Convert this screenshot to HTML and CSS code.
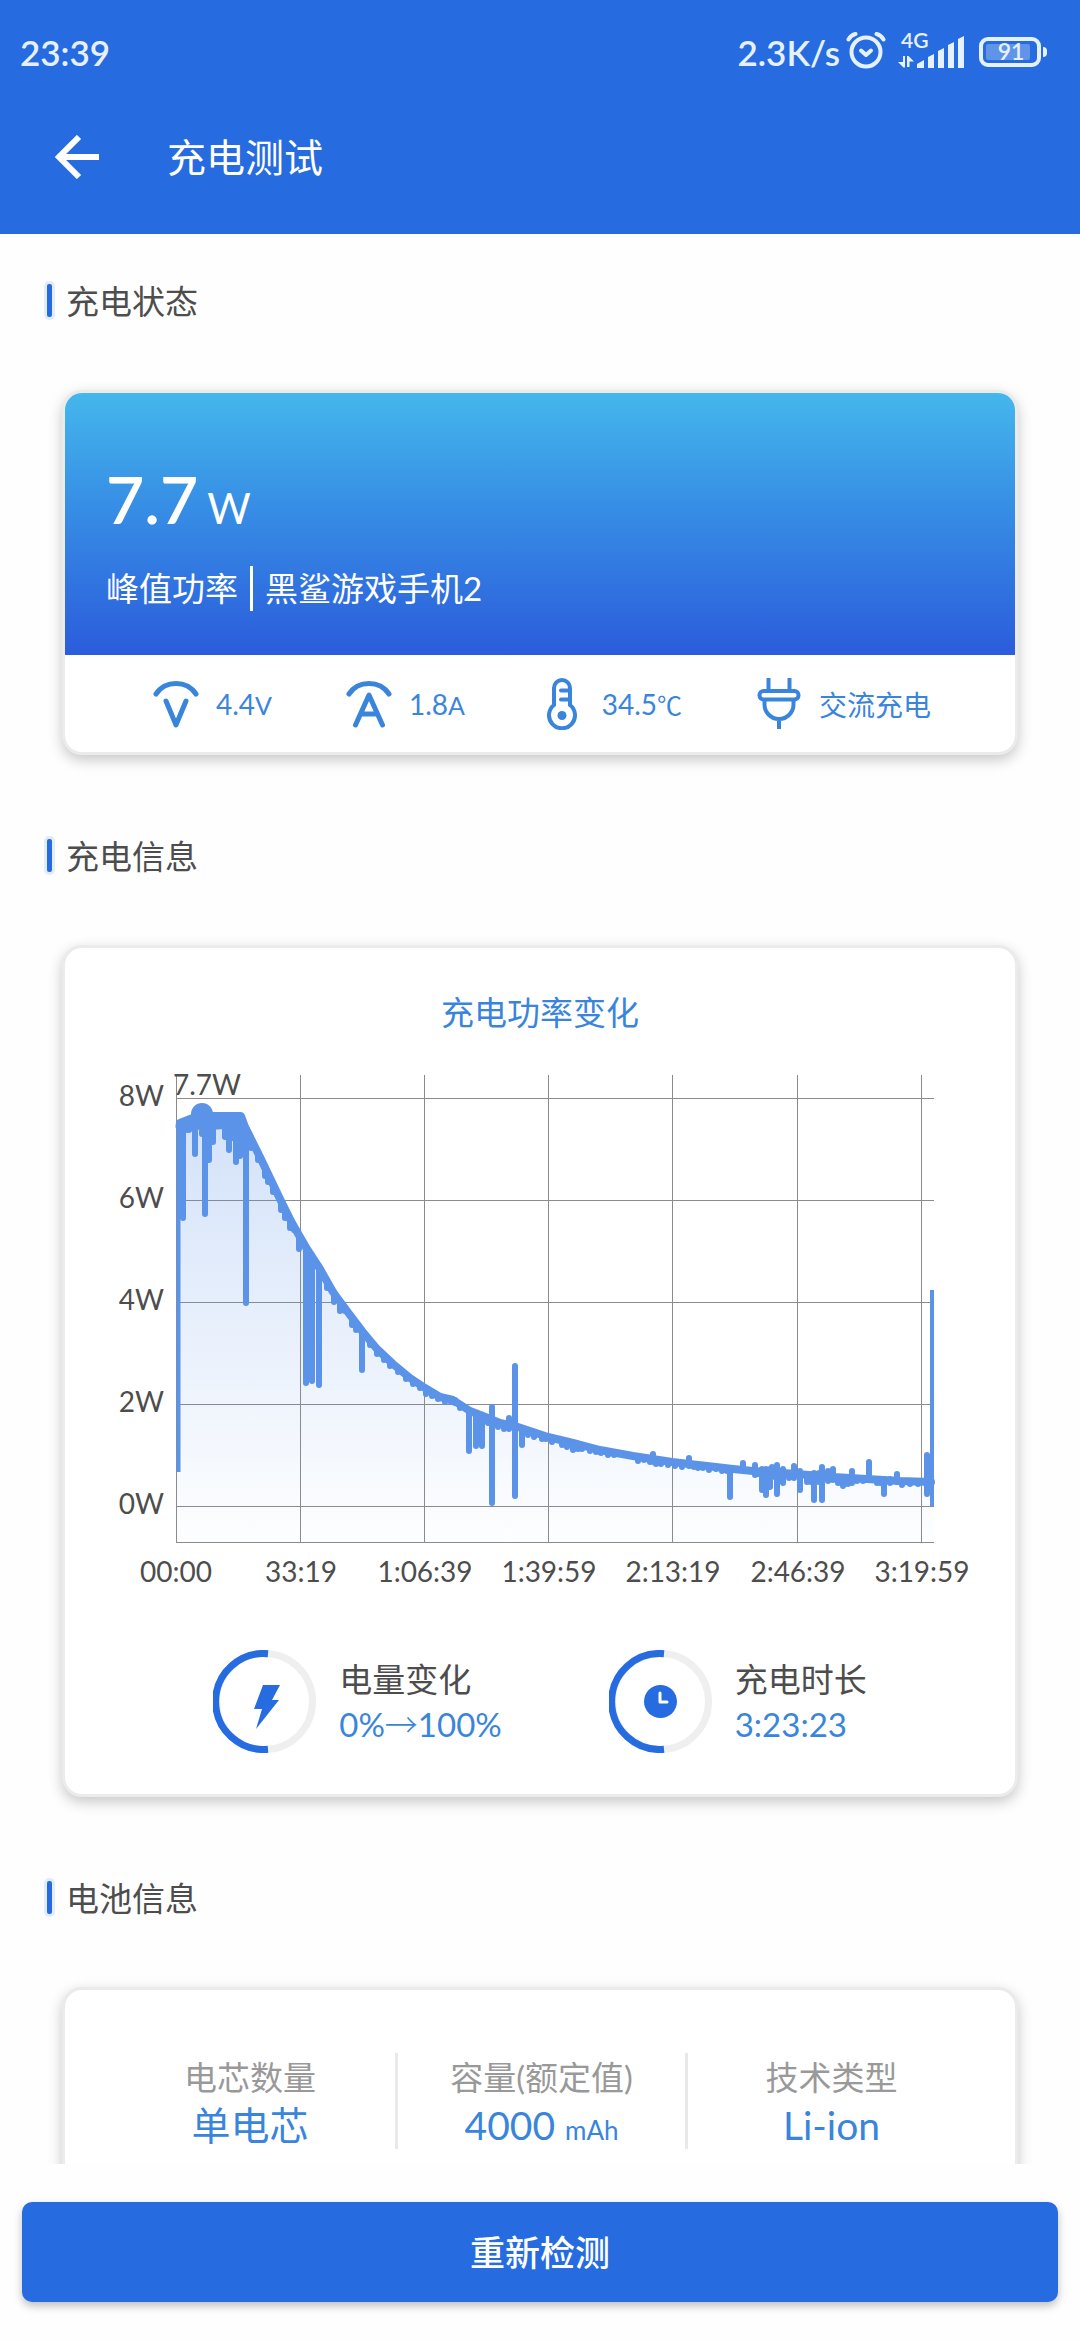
FILE: index.html
```html
<!DOCTYPE html>
<html lang="zh-CN">
<head>
<meta charset="utf-8">
<meta name="viewport" content="width=device-width, initial-scale=1">
<title>充电测试</title>
<link rel="stylesheet" href="styles.css">
</head>
<body>
<div class="app">
  <header class="header">
    <div class="status">
      <span class="status-time">23:39</span>
      <div class="status-right">
        <span>2.3K/s</span>
        <svg class="alarm" width="40" height="40" viewBox="0 0 40 40" fill="none" stroke="currentColor" stroke-width="4" stroke-linecap="round" stroke-linejoin="round">
          <circle cx="20" cy="20" r="14.500"/>
          <path d="M2.500 7.500Q5 3 9.500 2M37.500 7.500Q35 3 30.500 2"/>
          <path d="M15 18.500l5 4.500 5-4.500"/>
        </svg>
        <svg class="signal" width="68" height="56" viewBox="0 -8 68 56" fill="currentColor">
          <text class="signal-label" x="3" y="16">4G</text>
          <path d="M5 24v6H0l5.500 5.500H7V24zM9 35V24h1.500l5.500 5.500h-4.500V35z"/>
          <path d="M19 36v-4l7-4v8zM30 36V25l6-3v14zM40 36V19l6-3v20zM50 36V13l6-3v26zM60 36V7l6-3v32z"/>
        </svg>
        <svg class="battery" width="70" height="32" viewBox="0 0 70 32">
          <rect x="3" y="3" width="58" height="26" rx="7" fill="none" stroke="currentColor" stroke-width="4"/>
          <rect x="8" y="8" width="44" height="16" rx="2" fill="currentColor" opacity=".3"/>
          <path d="M65 11a4 4 0 0 1 4 4v2a4 4 0 0 1-4 4z" fill="currentColor"/>
          <text class="battery-label" x="33" y="24" text-anchor="middle">91</text>
        </svg>
      </div>
    </div>
    <div class="appbar">
      <button class="back" type="button" aria-label="返回">
        <svg width="44" height="44" viewBox="0 0 44 44" fill="none" stroke="currentColor" stroke-width="6">
          <path d="M44 22H4M24 2L4 22l20 20"/>
        </svg>
      </button>
      <h1 class="title">充电测试</h1>
    </div>
  </header>

  <main class="content">
    <h2 class="section">充电状态</h2>
    <section class="card">
      <div class="hero">
        <p class="power"><strong>7.7</strong><span class="power-unit">W</span></p>
        <p class="hero-line"><span>峰值功率</span><span class="device">黑鲨游戏手机2</span></p>
      </div>
      <ul class="metrics">
        <li class="metric">
          <svg width="46" height="52" viewBox="0 0 46 52" fill="none" stroke="currentColor" stroke-width="5" stroke-linecap="round" stroke-linejoin="round">
            <path d="M3 16Q10 5.500 23 5.500T43 16M13 23l10 24 10-24"/>
          </svg>
          <span>4.4<small>V</small></span>
        </li>
        <li class="metric">
          <svg width="46" height="52" viewBox="0 0 46 52" fill="none" stroke="currentColor" stroke-width="5" stroke-linecap="round" stroke-linejoin="round">
            <path d="M3 16Q10 5.500 23 5.500T43 16M9.500 47L23 17l13.500 30M15 36h16"/>
          </svg>
          <span>1.8<small>A</small></span>
        </li>
        <li class="metric">
          <svg width="46" height="52" viewBox="0 0 46 52" fill="none" stroke="currentColor" stroke-width="4" stroke-linecap="round">
            <path d="M15 27V10a8 8 0 0 1 16 0v17a13 13 0 1 1-16 0M22 12.500h8M22 21.500h8"/>
            <circle cx="23" cy="37.500" r="4.500" fill="currentColor" stroke="none"/>
          </svg>
          <span>34.5<small>℃</small></span>
        </li>
        <li class="metric">
          <svg width="46" height="52" viewBox="0 0 46 52" fill="none" stroke="currentColor" stroke-width="4">
            <rect x="3.500" y="13" width="39" height="8.500" rx="4"/>
            <path d="M12.500 0v12M33.500 0v12M8.500 22v4.500a14.500 14.500 0 0 0 29 0V22M23 41v10"/>
          </svg>
          <span>交流充电</span>
        </li>
      </ul>
    </section>

    <h2 class="section">充电信息</h2>
    <section class="card">
      <h3 class="chart-title">充电功率变化</h3>
      <svg class="chart" viewBox="0 0 950 546" role="img" aria-label="充电功率变化">
        <defs>
          <linearGradient id="area" gradientUnits="userSpaceOnUse" x1="0" y1="60" x2="0" y2="492">
            <stop offset="0" stop-color="#5b92e8" stop-opacity=".27"/>
            <stop offset="1" stop-color="#5b92e8" stop-opacity=".01"/>
          </linearGradient>
        </defs>
        <path class="grid" d="M111 48.500H869M111 150.500H869M111 252.500H869M111 354.500H869M111 456.500H869M111 492.500H869M111.500 25V493M235.500 25V493M359.500 25V493M483.500 25V493M607.500 25V493M732.500 25V493M856.500 25V493"/>
        <path fill="url(#area)" d="M112 70L177 71 185 88 195 107 205 128 215 149 227 173 235 187 242 199 255 218 268 242 282 261 297 281 312 299 328 314 345 328 360 338 375 347 388 350 405 361 418 366 435 373 450 376 468 382 483 387 508 393 535 400 568 406 607 412 642 416 668 419 688 421 732 424 768 427 802 429 835 431 869 432V492H112z"/>
        <g class="line">
          <path class="band" d="M115 73L125 69 137 66 176 66 180 77 185 87 195 107 205 128 215 149 227 173 235 187 242 199 255 219 268 242 282 261 297 281 312 299 328 314 345 328 360 338 375 347 388 350 405 361 418 366 435 373 450 376 468 382 483 387 508 393 535 400 568 406 607 412 642 416 668 419 688 421 732 424 768 427 802 429 835 431 866 432"/>
          <path class="plateau" d="M118 76L137 71 152 72 165 71 173 72 181 87"/>
          <path class="edge" d="M113.500 70V422M867 240V456"/>
          <path d="M116 76V156M118 76V168M124 74V80M130 70V104M137 70V84M140 70V164M144 70V110M148 70V92M155 70V74M160 68V87M164 68V100M168 68V88M171 68V112M175 70V106M181 80V253M186 90V98M193 102V110M200 118V126M203 124V132M208 134V142M216 150V160M220 160V168M225 170V178M229 176V180M234 186V199M241 198V333M247 206V331M254 216V335M262 232V238M269 242V252M275 252V261M280 258V261M287 268V275M291 274V280M297 281V320M305 292V295M312 300V304M319 306V310M325 312V316M333 318V322M341 326V329M348 331V334M355 336V338M361 339V344M367 342V346M373 346V349M380 348V352M386 350V352M390 350V353M395 354V358M404 361V401M411 363V396M417 366V396M423 368V373M427 357V453M433 373V377M439 374V379M444 368V379M450 316V446M457 378V395M463 381V385M469 383V387M477 386V389M481 387V389M487 388V392M497 391V395M502 393V397M508 395V400M513 396V399M517 396V399M525 398V401M531 399V402M536 400V403M543 402V405M549 403V405M573 408V411M579 408V410M588 404V412M585 410V412M591 411V414M596 411V414M603 412V415M610 413V416M617 413V417M624 408V416M629 415V417M633 416V418M638 416V418M644 417V420M651 417V419M657 418V421M662 418V421M665 419V447M678 413V420M690 415V425M693 421V424M697 419V440M701 419V445M705 419V437M707 417V427M712 415V444M718 419V433M724 423V428M729 416V428M735 421V440M742 425V432M746 425V432M749 423V450M754 423V432M757 417V450M763 421V431M768 419V430M773 427V433M778 427V436M783 427V434M787 421V433M792 428V431M798 429V431M804 412V429M812 430V433M815 429V433M819 429V444M825 429V433M832 424V432M837 431V435M845 432V434M853 432V434M862 405V444"/>
          <circle class="peak" cx="137" cy="64" r="11"/>
        </g>
        <g class="axis">
          <text x="108" y="45">7.7W</text>
          <g text-anchor="end">
            <text x="99" y="56">8W</text>
            <text x="99" y="158">6W</text>
            <text x="99" y="260">4W</text>
            <text x="99" y="362">2W</text>
            <text x="99" y="464">0W</text>
          </g>
          <g text-anchor="middle">
            <text x="111" y="532">00:00</text>
            <text x="236" y="532">33:19</text>
            <text x="360" y="532">1:06:39</text>
            <text x="484" y="532">1:39:59</text>
            <text x="608" y="532">2:13:19</text>
            <text x="733" y="532">2:46:39</text>
            <text x="857" y="532">3:19:59</text>
          </g>
        </g>
      </svg>
      <div class="gauges">
        <div class="gauge">
          <svg width="103" height="103" viewBox="0 0 103 103" fill="none" stroke-width="7">
            <circle cx="51.500" cy="51.500" r="48" stroke="#efefef"/>
            <path d="M55 3.700A48 48 0 1 0 55 99.300" stroke="#266ce0"/>
            <path d="M50 35h17l-8 15h7L43 79l6-20h-8z" fill="#266ce0"/>
          </svg>
          <div>
            <p class="gauge-label">电量变化</p>
            <p class="gauge-value">0%<span class="arrow">→</span>100%</p>
          </div>
        </div>
        <div class="gauge">
          <svg width="103" height="103" viewBox="0 0 103 103" fill="none" stroke-width="7">
            <circle cx="51.500" cy="51.500" r="48" stroke="#efefef"/>
            <path d="M55 3.700A48 48 0 1 0 55 99.300" stroke="#266ce0"/>
            <circle cx="51.500" cy="51.500" r="16.500" fill="#266ce0"/>
            <path d="M51 43v9h7" stroke="#fff" stroke-width="3" stroke-linecap="round" stroke-linejoin="round"/>
          </svg>
          <div>
            <p class="gauge-label">充电时长</p>
            <p class="gauge-value">3:23:23</p>
          </div>
        </div>
      </div>
    </section>

    <h2 class="section">电池信息</h2>
    <section class="card">
      <dl class="specs">
        <div class="spec"><dt>电芯数量</dt><dd>单电芯</dd></div>
        <div class="spec"><dt>容量(额定值)</dt><dd>4000 <small>mAh</small></dd></div>
        <div class="spec"><dt>技术类型</dt><dd>Li-ion</dd></div>
      </dl>
    </section>
  </main>

  <footer class="footer">
    <button class="retest" type="button">重新检测</button>
  </footer>
</div>
</body>
</html>
```
FILE: styles.css
```css
* {
  box-sizing: border-box;
}

body,
h1,
h2,
h3,
p,
ul,
dl,
dd {
  margin: 0;
  padding: 0;
  font-weight: 400;
}

body {
  background: #fefefe;
  color: #4d4d4d;
  font-family: Lato, "Noto Sans CJK SC", sans-serif;
  font-size: 33px;
}

button {
  border: 0;
  font: inherit;
  color: #fff;
}

svg {
  flex: none;
}

.app {
  display: flex;
  flex-direction: column;
  height: 100vh;
}

.header {
  flex: none;
  padding-bottom: 24px;
  background: #266ce0;
  color: #fff;
}

.status {
  display: flex;
  align-items: center;
  justify-content: space-between;
  height: 104px;
  padding: 0 32px 0 20px;
  color: #e6f1ff;
  font-size: 35px;
  font-weight: 600;
}

.status-right {
  display: flex;
  align-items: center;
}

.alarm {
  margin: 0 12px 0 6px;
}

.signal {
  margin-right: 12px;
}

.signal-label {
  font-size: 21px;
}

.battery-label {
  font-size: 23px;
}

.signal-label,
.battery-label {
  fill: currentColor;
}

.appbar {
  display: flex;
  align-items: center;
  gap: 68px;
  height: 106px;
  padding-left: 55px;
}

.back {
  display: flex;
  padding: 0;
  background: none;
}

.title {
  padding-bottom: 4px;
  font-size: 39px;
}

.content {
  flex: 1;
  min-height: 0;
  padding: 46px 62px 80px;
  overflow-y: auto;
  scrollbar-width: none;
}

.section {
  display: flex;
  align-items: center;
  gap: 11px;
  height: 40px;
  margin: 0 0 70px -18px;
  font-size: 33px;
}

.section::before {
  content: "";
  width: 5px;
  height: 33px;
  border: 3px solid #e3ecf9;
  border-radius: 5px;
  background: #266ce0;
}

.card {
  margin-bottom: 80px;
  border: 3px solid #ebebeb;
  border-radius: 20px;
  background: #fff;
  box-shadow: 0 5px 14px rgba(0, 0, 0, 0.22);
  overflow: hidden;
}

.hero {
  padding: 73px 41px 44px;
  background: linear-gradient(#45b7ec, #378fe5 42%, #2b5cdc);
  color: #fff;
}

.power {
  display: flex;
  align-items: baseline;
  gap: 9px;
  margin-bottom: 34px;
  font-size: 66px;
  line-height: 66px;
}

.power strong {
  font-weight: 600;
}

.power-unit {
  font-size: 42px;
  line-height: 42px;
}

.hero-line {
  display: flex;
  line-height: 45px;
}

.device {
  margin-left: 12px;
  padding-left: 12px;
  border-left: 3px solid #fff;
}

.metrics {
  display: flex;
  align-items: center;
  justify-content: space-between;
  height: 97px;
  padding: 0 84px 0 88px;
  color: #3a85dc;
  font-size: 28px;
  list-style: none;
}

.metric {
  display: flex;
  align-items: center;
  gap: 17px;
}

.metric small {
  font-size: 25px;
}

.chart-title {
  margin: 39px 0 13px;
  color: #3a85dc;
  font-size: 33px;
  line-height: 50px;
  text-align: center;
}

.chart {
  display: block;
  width: 100%;
}

.grid {
  stroke: #8b8b8b;
}

.line {
  fill: none;
  stroke: #5b93e9;
  stroke-width: 6px;
  stroke-linecap: round;
  stroke-linejoin: round;
}

.band {
  stroke-width: 8px;
}

.plateau {
  stroke-width: 15px;
}

.edge {
  stroke-width: 4px;
  stroke-linecap: butt;
}

.peak {
  fill: #5b93e9;
  stroke: none;
}

.axis {
  fill: #4d4d4d;
  font-size: 28px;
}

.gauges {
  display: flex;
  justify-content: center;
  gap: 107px;
  margin: 54px 0 41px;
}

.gauge {
  display: flex;
  align-items: center;
  gap: 23px;
}

.gauge-label,
.gauge-value {
  line-height: 45px;
}

.gauge-value {
  color: #3a85dc;
}

.arrow {
  font-family: "Noto Sans CJK SC", sans-serif;
  font-weight: 300;
  line-height: 33px;
}

.specs {
  display: grid;
  grid-template-columns: repeat(3, 1fr);
  padding: 63px 40px;
}

.spec {
  height: 96px;
  text-align: center;
}

.spec + .spec {
  border-left: 3px solid #e9e9e9;
}

.spec dt {
  color: #999;
  line-height: 48px;
}

.spec dd {
  color: #3a85dc;
  font-size: 39px;
  line-height: 48px;
}

.spec small {
  font-size: 26px;
}

.footer {
  flex: none;
  padding: 38px 22px;
  background: #fefefe;
}

.retest {
  display: block;
  width: 100%;
  height: 100px;
  padding: 0 0 4px;
  border-radius: 10px;
  background: #266ce0;
  box-shadow: 0 4px 8px rgba(0, 0, 0, 0.25);
  font-size: 35px;
  font-weight: 500;
}
```
